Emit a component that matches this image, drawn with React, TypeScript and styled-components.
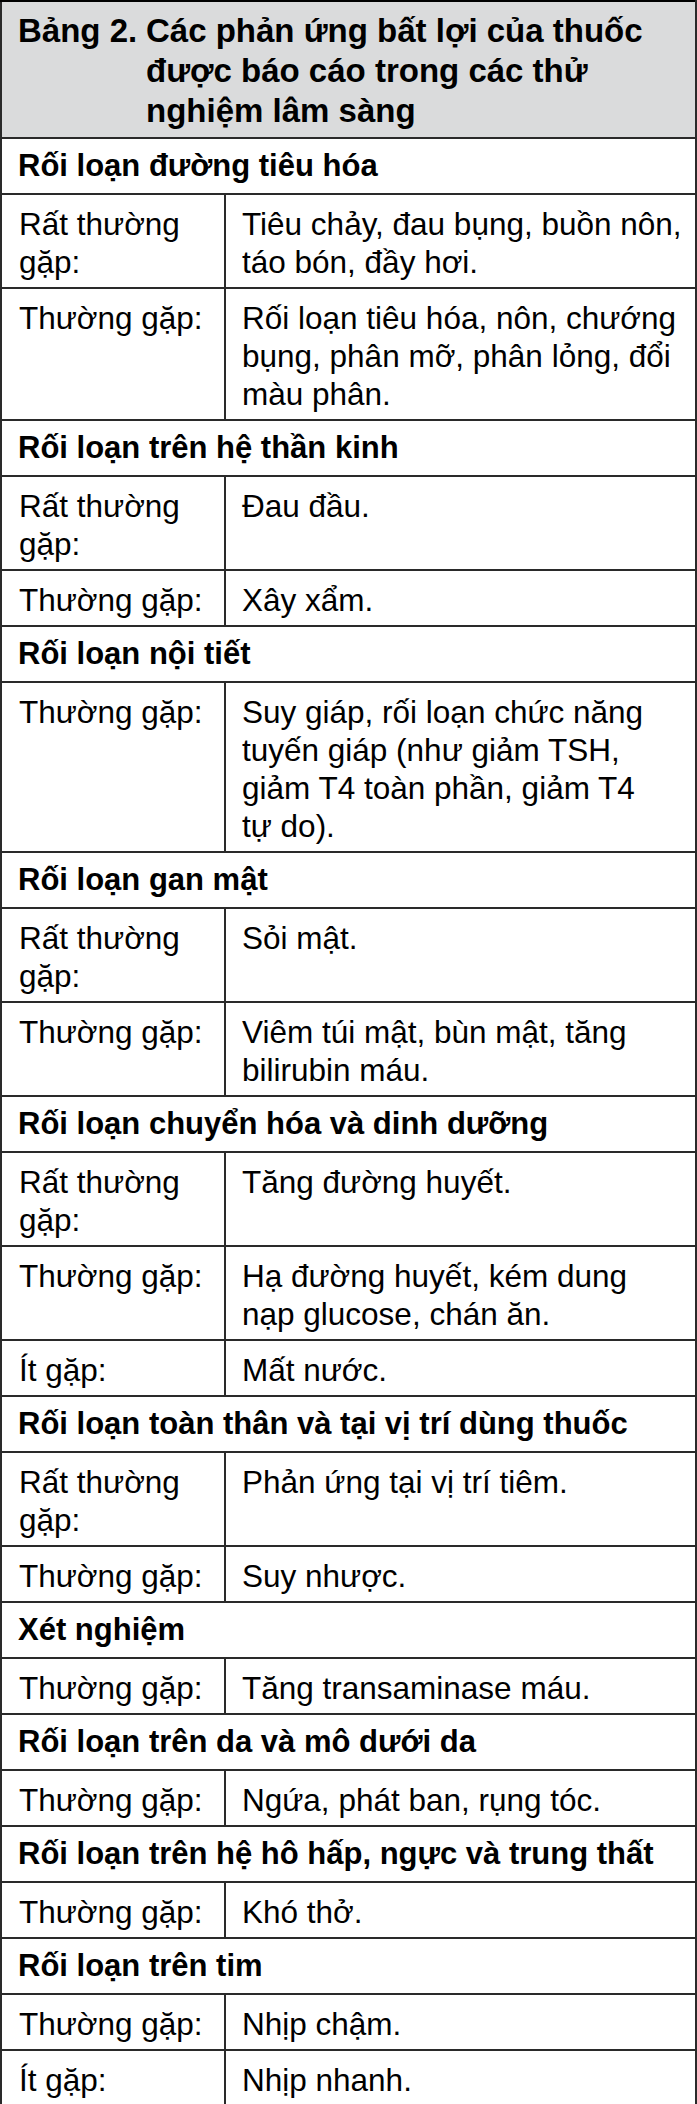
import React from "react";
import styled, { createGlobalStyle } from "styled-components";

const GlobalStyle = createGlobalStyle`
  html, body {
    margin: 0;
    padding: 0;
    background: #ffffff;
  }
  body {
    font-family: "Liberation Sans", Arial, sans-serif;
    color: #000;
  }
`;

const Table = styled.table`
  width: 697px;
  border-collapse: collapse;
  table-layout: fixed;
  border: 2px solid #000;
  font-family: "Liberation Sans", Arial, sans-serif;
`;

const TitleCell = styled.th`
  background: #dadbdc;
  border: 2px solid #2a2a2a;
  border-top-color: #000;
  padding: 9px 10px 6px 16px;
  text-align: left;
  font-weight: 700;
  font-size: 33px;
  line-height: 40px;
`;

const TitleInner = styled.div`
  display: flex;
  align-items: flex-start;
`;

const TitleLabel = styled.span`
  flex: 0 0 128px;
  white-space: nowrap;
`;

const TitleText = styled.span`
  flex: 1 1 auto;
`;

const SectionCell = styled.td`
  border: 2px solid #2a2a2a;
  padding: 8px 10px 8px 16px;
  font-weight: 700;
  font-size: 31px;
  line-height: 38px;
`;

const LabelCell = styled.td`
  border: 2px solid #2a2a2a;
  padding: 10px 8px 6px 17px;
  font-size: 31.5px;
  line-height: 38px;
  vertical-align: top;
`;

const ValueCell = styled.td`
  border: 2px solid #2a2a2a;
  padding: 10px 6px 6px 16px;
  font-size: 31.5px;
  line-height: 38px;
  vertical-align: top;
`;

type Entry = { freq: string; text: string };
type Section = { title: string; entries: Entry[] };

const VERY = "Rất thường gặp:";
const COMMON = "Thường gặp:";
const RARE = "Ít gặp:";

const sections: Section[] = [
  {
    title: "Rối loạn đường tiêu hóa",
    entries: [
      { freq: VERY, text: "Tiêu chảy, đau bụng, buồn nôn, táo bón, đầy hơi." },
      {
        freq: COMMON,
        text: "Rối loạn tiêu hóa, nôn, chướng bụng, phân mỡ, phân lỏng, đổi màu phân.",
      },
    ],
  },
  {
    title: "Rối loạn trên hệ thần kinh",
    entries: [
      { freq: VERY, text: "Đau đầu." },
      { freq: COMMON, text: "Xây xẩm." },
    ],
  },
  {
    title: "Rối loạn nội tiết",
    entries: [
      {
        freq: COMMON,
        text: "Suy giáp, rối loạn chức năng tuyến giáp (như giảm TSH, giảm T4 toàn phần, giảm T4 tự\u00a0do).",
      },
    ],
  },
  {
    title: "Rối loạn gan mật",
    entries: [
      { freq: VERY, text: "Sỏi mật." },
      { freq: COMMON, text: "Viêm túi mật, bùn mật, tăng bilirubin máu." },
    ],
  },
  {
    title: "Rối loạn chuyển hóa và dinh dưỡng",
    entries: [
      { freq: VERY, text: "Tăng đường huyết." },
      { freq: COMMON, text: "Hạ đường huyết, kém dung nạp\u00a0glucose, chán ăn." },
      { freq: RARE, text: "Mất nước." },
    ],
  },
  {
    title: "Rối loạn toàn thân và tại vị trí dùng thuốc",
    entries: [
      { freq: VERY, text: "Phản ứng tại vị trí tiêm." },
      { freq: COMMON, text: "Suy nhược." },
    ],
  },
  {
    title: "Xét nghiệm",
    entries: [{ freq: COMMON, text: "Tăng transaminase máu." }],
  },
  {
    title: "Rối loạn trên da và mô dưới da",
    entries: [{ freq: COMMON, text: "Ngứa, phát ban, rụng tóc." }],
  },
  {
    title: "Rối loạn trên hệ hô hấp, ngực và trung thất",
    entries: [{ freq: COMMON, text: "Khó thở." }],
  },
  {
    title: "Rối loạn trên tim",
    entries: [
      { freq: COMMON, text: "Nhịp chậm." },
      { freq: RARE, text: "Nhịp nhanh." },
    ],
  },
];

export default function App() {
  return (
    <>
      <GlobalStyle />
      <Table>
        <colgroup>
          <col style={{ width: 224 }} />
          <col />
        </colgroup>
        <thead>
          <tr>
            <TitleCell colSpan={2}>
              <TitleInner>
                <TitleLabel>Bảng 2.</TitleLabel>
                <TitleText>
                  Các phản ứng bất lợi của thuốc được báo cáo trong các thử nghiệm lâm sàng
                </TitleText>
              </TitleInner>
            </TitleCell>
          </tr>
        </thead>
        <tbody>
          {sections.map((s) => (
            <React.Fragment key={s.title}>
              <tr>
                <SectionCell colSpan={2}>{s.title}</SectionCell>
              </tr>
              {s.entries.map((e, i) => (
                <tr key={i}>
                  <LabelCell>{e.freq}</LabelCell>
                  <ValueCell>{e.text}</ValueCell>
                </tr>
              ))}
            </React.Fragment>
          ))}
        </tbody>
      </Table>
    </>
  );
}
